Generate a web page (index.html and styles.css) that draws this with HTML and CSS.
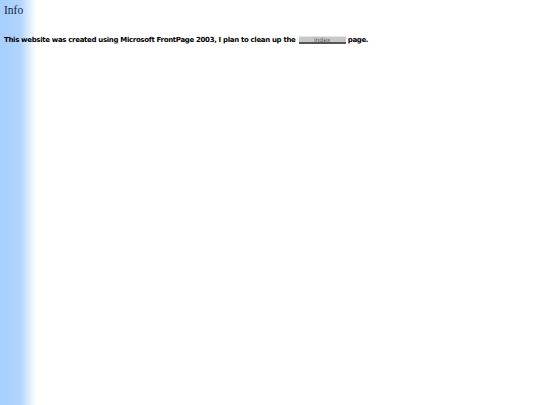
FILE: index.html
```html
<!DOCTYPE html>
<html>
<head>
<meta charset="utf-8">
<link rel="stylesheet" href="styles.css">
</head>
<body>
<div class="title">Info</div>
<p class="msg">This website was created using Microsoft FrontPage 2003, I plan to clean up the <span class="btn">index</span> page.</p>
</body>
</html>
```
FILE: styles.css
```css
html, body { margin: 0; padding: 0; height: 100%; }
body {
  background: linear-gradient(to right, #a6cfff 0px, #b0d4ff 20px, #ffffff 36px, #ffffff 100%);
  background-color: #fff;
  padding: 3px 4px;
  box-sizing: border-box;
}
.title {
  font-family: "Liberation Serif", serif;
  font-size: 11.5px;
  color: #141a3c;
  line-height: 14px;
}
.msg {
  margin: 18px 0 0 0;
  font-family: "DejaVu Sans", sans-serif;
  font-weight: bold;
  font-size: 7px;
  letter-spacing: -0.33px;
  line-height: 10px;
  color: #000;
}
.btn {
  display: inline-block;
  box-sizing: border-box;
  width: 47px;
  height: 8px;
  background: #c8c8c8;
  border-top: 1px solid #e6e6e6;
  border-bottom: 2px solid #555;
  font-family: "DejaVu Sans", sans-serif;
  font-weight: normal;
  letter-spacing: 0;
  font-size: 6px;
  line-height: 5px;
  text-align: center;
  color: #555;
  vertical-align: 0px;
  margin: 0 0 0 1px;
}
```
